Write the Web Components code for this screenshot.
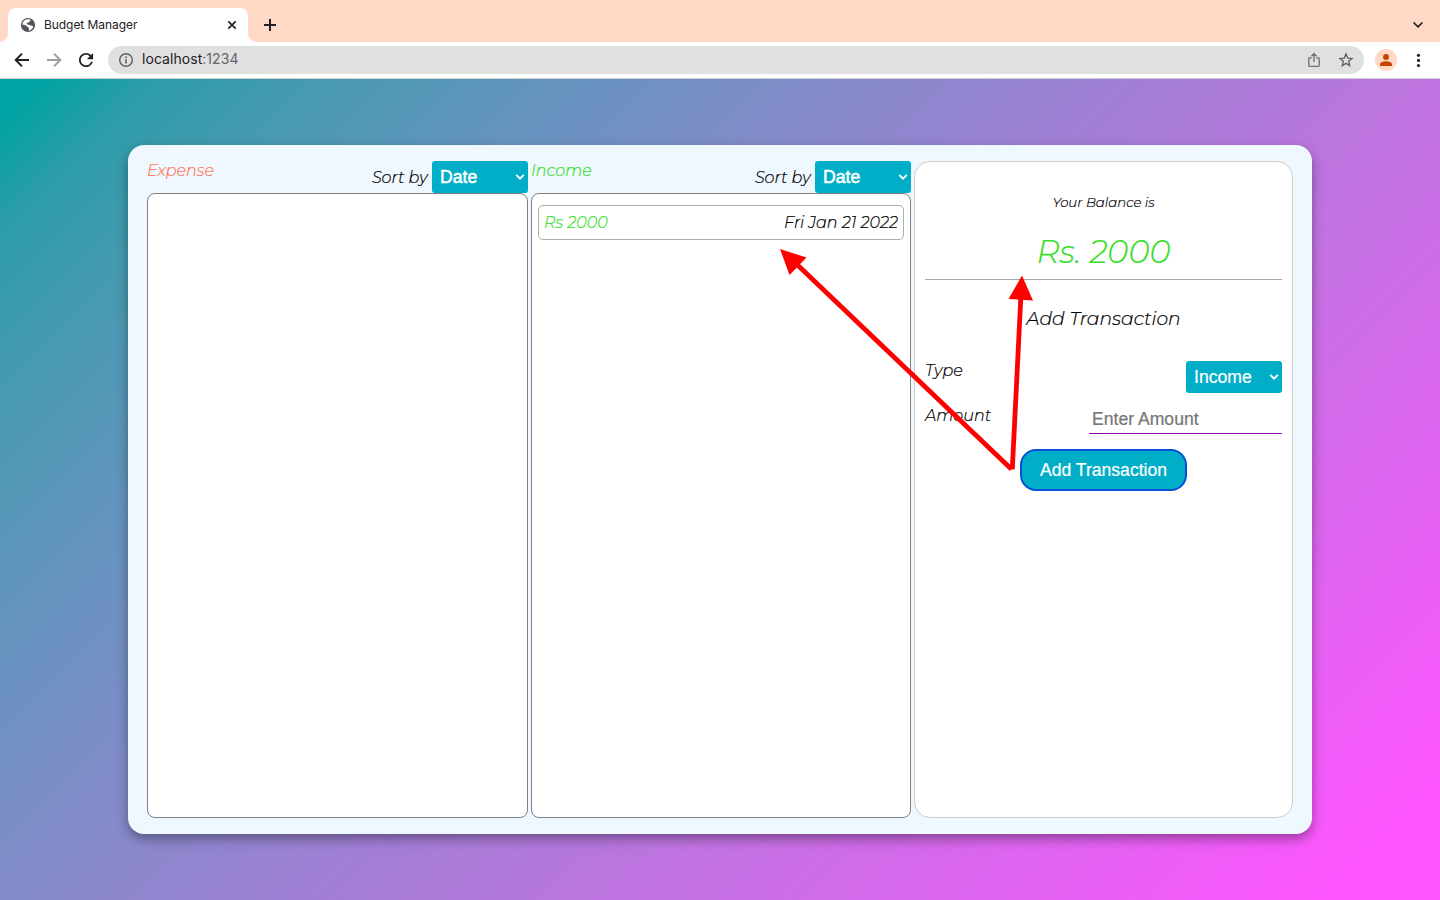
<!DOCTYPE html>
<html lang="en">
<head>
<meta charset="utf-8">
<title>Budget Manager</title>
<style>
html,body{margin:0;height:100%;overflow:hidden}
body{font-family:Montserrat,Inter,"Open Sans",sans-serif}
</style>
</head>
<body>
<app-window></app-window>
<script>
const define = (name, html) => customElements.define(name, class extends HTMLElement {
  constructor() {
    super();
    const t = document.createElement('template');
    t.innerHTML = html;
    this.attachShadow({ mode: 'open' }).append(t.content.cloneNode(true));
  }
});

define('browser-tab', `<style>
:host{display:flex;align-items:center;box-sizing:border-box;width:240px;height:34px;padding:0 10px 0 12px;background:#fff;border-radius:8px 8px 0 0;position:relative;font:12px Inter,Roboto,sans-serif;color:#1f2024}
:host::before,:host::after{content:"";position:absolute;bottom:0;width:8px;height:8px}
:host::before{left:-8px;background:radial-gradient(circle at 0 0,transparent 7.5px,#fff 8px)}
:host::after{right:-8px;background:radial-gradient(circle at 100% 0,transparent 7.5px,#fff 8px)}
span{flex:1;margin-left:8px;letter-spacing:-.06px;line-height:16px}
svg{display:block}
</style>
<svg width="16" height="16" viewBox="0 0 16 16"><circle cx="8" cy="8" r="7.1" fill="#50545b"/><path d="M2.2 7.4c2 .2 3.4.7 4.3 1.4.8.6.8 1.5 1.8 1.7.8.2.8.8.7 1.4l-.5 1.8c2.4-.4 4-1.7 4.8-3.6-.6-1-1.4-1.5-2.5-1.5-1.2 0-1.7-1-2.9-1-.7 0-1.4-.4-1.3-1.1.1-.7.8-.8 1.5-.8.9 0 .9-1.1 1.7-1.5.5-.3.7-.8.5-1.5C6.400 1.500 2.900 3.400 2.200 7.400z" fill="#fff"/></svg>
<span><slot></slot></span>
<svg width="12" height="12" viewBox="0 0 12 12"><path d="M2.300 2.300l7.400 7.400M9.700 2.300l-7.400 7.400" stroke="#202124" stroke-width="1.700" fill="none"/></svg>`);

define('browser-tabs', `<style>
:host{display:flex;box-sizing:border-box;height:42px;padding:8px 16px 0 8px;background:#ffd9c5}
.plus{margin:10px 0 0 15px}
.down{margin:12px 0 0 auto}
</style>
<browser-tab>Budget Manager</browser-tab>
<svg class="plus" width="14" height="14" viewBox="0 0 14 14"><path d="M7 1v12M1 7h12" stroke="#202124" stroke-width="2"/></svg>
<svg class="down" width="12" height="10" viewBox="0 0 12 10"><path d="M1.600 2.500L6 6.900l4.400-4.400" stroke="#202124" stroke-width="1.700" fill="none"/></svg>`);

define('browser-toolbar', `<style>
:host{display:flex;align-items:center;box-sizing:border-box;height:37px;padding:0 14px;background:#fff;border-bottom:1px solid #d0cfcf}
svg{display:block}
.f{margin-left:16px}
.address{display:flex;align-items:center;flex:1;height:28px;margin:0 11px 0 14px;padding:0 10px;border-radius:14px;background:#e0e0e0;font:14px/18px Inter,Roboto,sans-serif;color:#1f2124}
.url{flex:1;margin-left:8px;padding-bottom:2px;letter-spacing:.05px}
i{font-style:normal;color:#63656a}
.s{margin-left:16px}
.avatar{display:grid;place-items:center;width:22px;height:22px;border-radius:50%;background:#ffd9c5;margin-right:13px}
</style>
<svg width="16" height="16" viewBox="0 0 16 16"><path d="M15 8H2.500M8 1.600L1.700 8 8 14.400" stroke="#202124" stroke-width="2" fill="none"/></svg>
<svg class="f" width="16" height="16" viewBox="0 0 16 16"><path d="M1 8h12.500M8 1.600L14.300 8 8 14.400" stroke="#9c9ea0" stroke-width="2" fill="none"/></svg>
<svg class="f" width="16" height="16" viewBox="0 0 16 16"><path d="M13.650 2.350A7.958 7.958 0 0 0 8 0C3.580 0 .01 3.580.01 8S3.580 16 8 16c3.730 0 6.840-2.550 7.730-6h-2.080A5.990 5.990 0 0 1 8 14c-3.310 0-6-2.690-6-6s2.690-6 6-6c1.660 0 3.140.690 4.220 1.780L9 7h7V0z" transform="translate(1 1) scale(.88)" fill="#202124"/></svg>
<div class="address">
<svg width="16" height="16" viewBox="0 0 16 16"><circle cx="8" cy="8" r="6.300" fill="none" stroke="#5f6368" stroke-width="1.500"/><path d="M8 7.200v4.200M8 4.600v1.600" stroke="#5f6368" stroke-width="1.600"/></svg>
<span class="url">localhost<i>:1234</i></span>
<svg width="16" height="16" viewBox="0 0 16 16"><path d="M5.700 5.800H3.600a.8.8 0 0 0-.8.800v7a.8.8 0 0 0 .8.800h8.800a.8.8 0 0 0 .8-.800v-7a.8.8 0 0 0-.8-.800h-2.100M8 10V2M5.400 4.300L8 1.700l2.600 2.600" fill="none" stroke="#6a6d71" stroke-width="1.300"/></svg>
<svg class="s" width="16" height="16" viewBox="0 0 16 16"><path d="M8 2.100l1.700 4 4.300.400-3.300 2.800 1 4.300L8 11.300l-3.700 2.300 1-4.300L2 6.500l4.300-.400z" fill="none" stroke="#5f6368" stroke-width="1.400"/></svg>
</div>
<div class="avatar"><svg width="14" height="14" viewBox="0 0 14 14"><circle cx="7" cy="4" r="3" fill="#c74400"/><path d="M1 13v-1.500C1 9.500 4 8.300 7 8.300s6 1.200 6 3.200V13z" fill="#c74400"/></svg></div>
<svg width="16" height="16" viewBox="-2 0 16 16"><g fill="#202124"><circle cx="6.500" cy="3.300" r="1.600"/><circle cx="6.500" cy="8.400" r="1.600"/><circle cx="6.500" cy="13.500" r="1.600"/></g></svg>`);

define('drop-down', `<style>
:host{display:flex;align-items:center;justify-content:space-between;box-sizing:border-box;width:96px;height:32px;padding:0 3px 0 8px;border-radius:3px;background:#00aec8;color:#fff;font:17.600px "Liberation Sans",Arial,sans-serif;-webkit-text-stroke:var(--bold,.2px)}
</style>
<slot></slot><svg width="10" height="8" viewBox="0 0 10 8"><path d="M1.200 1.800L5 5.600l3.800-3.800" fill="none" stroke="#fff" stroke-width="1.900"/></svg>`);

define('list-column', `<style>
:host{display:flex;flex-direction:column;min-width:0}
header{display:flex;justify-content:space-between;height:32px;font-size:16px;font-style:italic;font-weight:300;line-height:20px;-webkit-text-stroke:.2px}
.sort{display:flex;gap:4.400px;color:#000}
.sort span{margin-top:7px}
drop-down{--bold:.5px}
.title{color:var(--title)}
.list{flex:1;box-sizing:border-box;border:1px solid #7f7f7f;border-radius:8px;background:#fff;padding:11px 6px}
</style>
<header><span class="title"><slot name="title"></slot></span><span class="sort"><span>Sort by</span><drop-down>Date</drop-down></span></header>
<div class="list"><slot></slot></div>`);

define('entry-row', `<style>
:host{display:flex;align-items:center;justify-content:space-between;box-sizing:border-box;height:35px;padding:0 5px;border:1px solid #adadad;border-radius:5px;font-size:16px;font-style:italic;font-weight:300;color:#000;-webkit-text-stroke:.2px}
.amount{color:#36de27}
</style><span class="amount"><slot name="amount"></slot></span><span><slot></slot></span>`);

define('balance-panel', `<style>
:host{display:flex;flex-direction:column;box-sizing:border-box;padding:0 10px;border:1px solid #ccc;border-radius:16px;background:#fff;font-style:italic;font-weight:300;color:#000;-webkit-text-stroke:.2px}
.small{margin-top:32px;text-align:center;font-size:13.280px;line-height:17px}
.total{margin-top:21px;height:47px;border-bottom:1px solid #a9a9a9;text-align:center;font-size:32px;line-height:39px;color:#36de27}
.heading{margin-top:27px;text-align:center;font-size:18.720px;line-height:23px}
.row{display:flex;justify-content:space-between;font-size:16px;line-height:20px}
.type{margin-top:31px;height:32px}
.sum{margin-top:13px;height:28px}
.input{box-sizing:border-box;width:193px;height:28px;padding:0 3px;border-bottom:1px solid #8b00a8;font:17.600px/26px "Liberation Sans",Arial,sans-serif;color:#757575}
button{align-self:center;box-sizing:border-box;width:167px;height:42px;margin-top:15px;padding:0;border:2px solid #0451d8;border-radius:16px;background:#00aec8;color:#fff;font:17.600px "Liberation Sans",Arial,sans-serif;-webkit-text-stroke:.2px}
</style>
<div class="small">Your Balance is</div>
<div class="total">Rs. 2000</div>
<div class="heading">Add Transaction</div>
<div class="row type"><span>Type</span><drop-down>Income</drop-down></div>
<div class="row sum"><span>Amount</span><div class="input">Enter Amount</div></div>
<button>Add Transaction</button>`);

define('budget-card', `<style>
:host{display:grid;grid-template-columns:381px 380px 379px;column-gap:3px;box-sizing:border-box;width:1184px;height:689px;padding:16px 19px;border-radius:16px;background:#eff7ff;box-shadow:0 5px 12px rgba(0,0,0,.36)}
</style>
<list-column style="--title:#ff7a58"><span slot="title">Expense</span></list-column>
<list-column style="--title:#36de27"><span slot="title">Income</span><entry-row><span slot="amount">Rs 2000</span>Fri Jan 21 2022</entry-row></list-column>
<balance-panel></balance-panel>`);

define('pointer-arrows', `<style>:host{display:block;position:absolute;left:0;top:0;pointer-events:none}svg{display:block}</style>
<svg width="1440" height="900" viewBox="0 0 1440 900"><path d="M1011.500 469.200L797 264.500M1012.300 469.500L1020.800 298" stroke="#f00" stroke-width="4.800" fill="none"/><path d="M780 249l26.500 8.500-17 17.500zM1022 275.500l11 25-24.500-1.500z" fill="#f00"/></svg>`);

define('app-window', `<style>
:host{display:flex;flex-direction:column;height:100vh;position:relative}
main{flex:1;display:flex;justify-content:center;align-items:center;box-sizing:border-box;background:linear-gradient(135deg,#00a3a3 1.900%,#2d9ca9 6.800%,#459ab0 13.500%,#6494be 24.300%,#808cc8 35.500%,#9982d2 46.500%,#c073e1 64.500%,#df64f0 80%,#ff55ff 95.500%)}
</style>
<browser-tabs></browser-tabs><browser-toolbar></browser-toolbar>
<main><budget-card></budget-card></main><pointer-arrows></pointer-arrows>`);
</script>
</body>
</html>
